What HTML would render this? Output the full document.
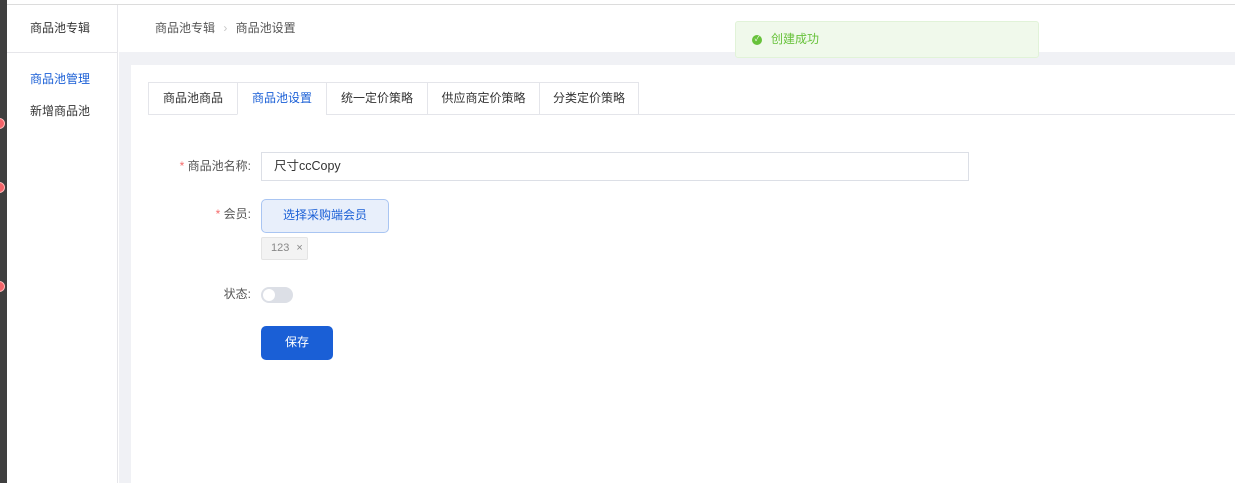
<!DOCTYPE html>
<html><head><meta charset="utf-8"><style>
*{margin:0;padding:0;box-sizing:border-box}
body{width:1235px;height:483px;overflow:hidden;background:#fff;font-family:"Liberation Sans","Noto Sans CJK SC",sans-serif;font-size:12px;line-height:14px;color:#333;position:relative}
.a{position:absolute}
.tab{position:absolute;top:82px;height:33px;border:1px solid #e4e5ea;background:#fff;text-align:center;line-height:31px;color:#333}
.dot{position:absolute;left:-6px;width:11px;height:11px;border-radius:50%;background:#f46469;border:1px solid #fbb}
</style></head><body>
<div class="a" style="left:7px;top:4px;width:1228px;height:1px;background:#dcdcdc"></div>
<div class="a" style="left:0;top:0;width:7px;height:483px;background:#3f3f3f"></div>
<div class="dot" style="top:118px"></div><div class="dot" style="top:182px"></div><div class="dot" style="top:281px"></div>
<div class="a" style="left:7px;top:5px;width:111px;height:478px;background:#fff;border-right:1px solid #e6e6ea"></div>
<div class="a" style="left:7px;top:52px;width:111px;height:1px;background:#e6e6ea"></div>
<div class="a" style="left:30px;top:21px;color:#333">商品池专辑</div>
<div class="a" style="left:30px;top:72px;color:#1a5fd6">商品池管理</div>
<div class="a" style="left:30px;top:104px;color:#333">新增商品池</div>
<div class="a" style="left:119px;top:52px;width:1116px;height:431px;background:#f0f1f5"></div>
<div class="a" style="left:131px;top:65px;width:1104px;height:418px;background:#fff"></div>
<div class="a" style="left:155px;top:21px;color:#555">商品池专辑 <span style="color:#c8c8c8;margin:0 5px">›</span> 商品池设置</div>
<div class="a" style="left:148px;top:114px;width:1087px;height:1px;background:#e4e5ea"></div>
<div class="tab" style="left:148px;width:90px">商品池商品</div>
<div class="tab" style="left:237px;width:90px;color:#1a5fd6;border-bottom-color:#fff">商品池设置</div>
<div class="tab" style="left:326px;width:102px">统一定价策略</div>
<div class="tab" style="left:427px;width:113px">供应商定价策略</div>
<div class="tab" style="left:539px;width:100px">分类定价策略</div>
<div class="a" style="left:150px;top:159px;width:101px;text-align:right;color:#555"><span style="color:#f56c6c">*</span> 商品池名称:</div>
<div class="a" style="left:261px;top:152px;width:708px;height:29px;border:1px solid #dcdfe6;padding-left:12px;line-height:26px;font-size:12.5px;color:#333">尺寸ccCopy</div>
<div class="a" style="left:150px;top:207px;width:101px;text-align:right;color:#555"><span style="color:#f56c6c">*</span> 会员:</div>
<div class="a" style="left:261px;top:199px;width:128px;height:34px;border:1px solid #a9c5f2;background:#e8effb;border-radius:5px;text-align:center;line-height:30px;color:#1a5fd6">选择采购端会员</div>
<div class="a" style="left:261px;top:237px;width:47px;height:23px;border:1px solid #e4e4e4;background:#f3f3f3;border-radius:2px;line-height:20px;padding-left:9px;font-size:11px;color:#888">123 <span style="margin-left:4px">×</span></div>
<div class="a" style="left:150px;top:287px;width:101px;text-align:right;color:#555">状态:</div>
<div class="a" style="left:261px;top:287px;width:32px;height:16px;border-radius:8px;background:#dcdfe6"><div class="a" style="left:2px;top:2px;width:12px;height:12px;border-radius:50%;background:#fff"></div></div>
<div class="a" style="left:261px;top:326px;width:72px;height:34px;border-radius:5px;background:#1a5fd6;color:#fff;text-align:center;line-height:32px">保存</div>
<div class="a" style="left:735px;top:21px;width:304px;height:37px;border:1px solid #e1f3d8;background:#f0f9eb;border-radius:3px"></div>
<div class="a" style="left:752px;top:35px;width:10px;height:10px;border-radius:50%;background:#67c23a;color:#fff;font-size:7px;line-height:10px;text-align:center">✓</div>
<div class="a" style="left:771px;top:32px;color:#67c23a">创建成功</div>
</body></html>
